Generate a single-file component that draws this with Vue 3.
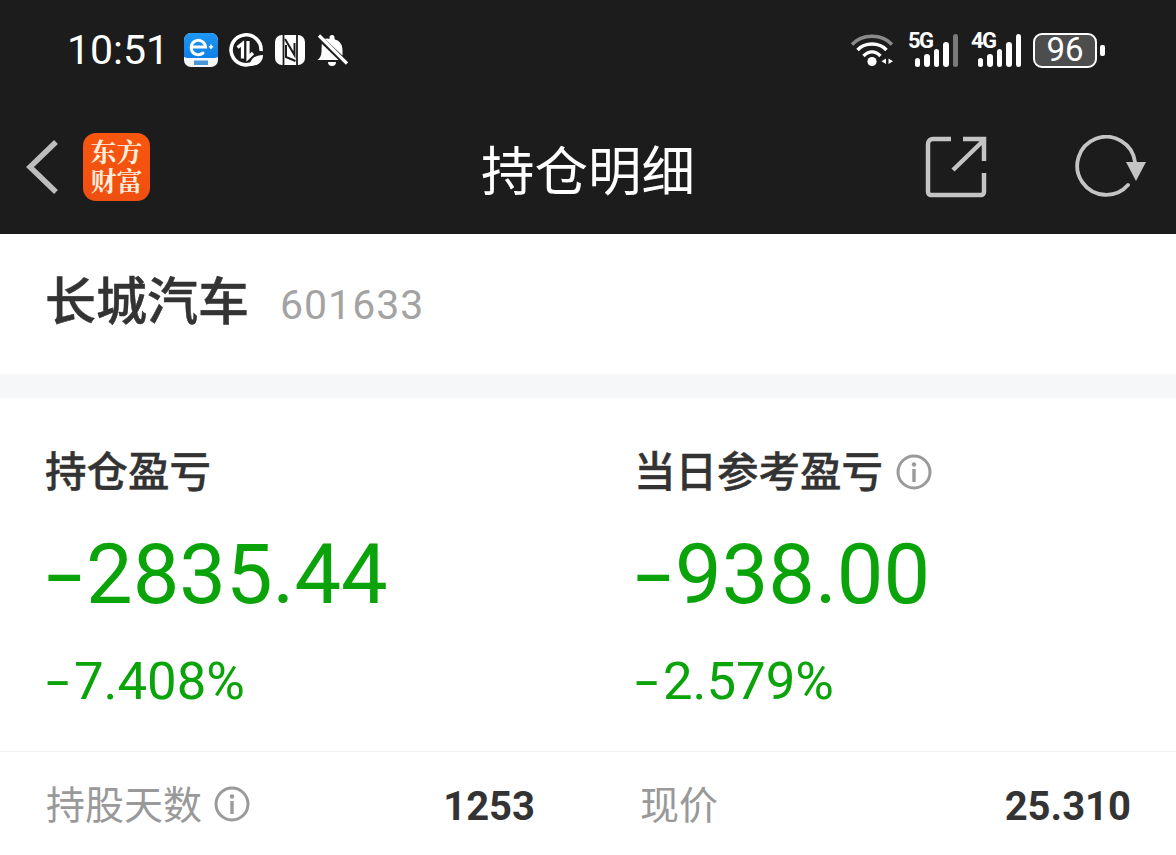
<script setup>
const metrics = [
  { title: '持仓盈亏', sign: '-', value: '2835.44', pctSign: '-', pct: '7.408%', info: false },
  { title: '当日参考盈亏', sign: '-', value: '938.00', pctSign: '-', pct: '2.579%', info: true }
]
</script>

<template>
  <div class="page">
    <header class="top">
      <div class="status">
        <div class="status-left">
          <span class="time">10:51</span>
          <svg viewBox="0 0 34 34" width="34" height="34">
            <defs><linearGradient id="appg" x1="0" y1="0" x2="0" y2="1"><stop offset="0" stop-color="#1e97f5"/><stop offset="1" stop-color="#0f7fe6"/></linearGradient></defs>
            <rect width="34" height="34" rx="7" fill="#f4f7fa"/>
            <path d="M0 7a7 7 0 0 1 7-7h20a7 7 0 0 1 7 7v17l-3 1H3l-3-1z" fill="url(#appg)"/>
            <path d="M8 14h13.500a7.200 7.200 0 1 0-2.500 6" fill="none" stroke="#fff" stroke-width="3" stroke-linecap="round"/>
            <path d="M27 11.500v4.500M24.800 13.700h4.400" stroke="#fff" stroke-width="1.500"/>
            <rect x="10" y="27.500" width="14" height="4.500" fill="#4a94d8"/>
          </svg>
          <svg viewBox="0 0 36 36" width="36" height="36">
            <path d="M26 30.500A15 15 0 1 1 33 19" fill="none" stroke="#fff" stroke-width="3.600"/>
            <path d="M9.500 15.500l5-4v15M20 9v17l5-5" fill="none" stroke="#fff" stroke-width="3.200"/>
            <path d="M22 34c0-7 5-11 13-11 0 7-5 11-13 11z" fill="#fff"/>
          </svg>
          <svg viewBox="0 0 32 32" width="32" height="32">
            <rect x="1" y="1" width="30" height="30" rx="7" fill="#fff"/>
            <path d="M9.500 1v30M23 1v30" stroke="#1c1c1c" stroke-width="1.800"/>
            <path d="M11 5 20.500 21V9M12 11v12l9.500 4" fill="none" stroke="#1c1c1c" stroke-width="2"/>
          </svg>
          <svg viewBox="0 0 32 32" width="32" height="32">
            <path fill="#fff" d="M16 1a2.500 2.500 0 0 1 2.500 2.500v1.700C24 6.500 26.500 11 26.500 16v5.500L8.500 4.800C10 4.500 12 4 13.500 5V3.500A2.500 2.500 0 0 1 16 1zM5.800 9.800 22.500 26H1.500c2.500-2 4-4.500 4-8.500zM12 28h8a4 4 0 0 1-8 0z"/>
            <path d="M3 1.500 31 29.500" stroke="#fff" stroke-width="3.200"/>
          </svg>
        </div>
        <div class="status-right">
          <svg viewBox="0 0 46 36" width="46" height="36">
            <path d="M2 12.500C12 1.500 32 1.500 42 12.500" fill="none" stroke="#8a8a8a" stroke-width="3.400"/>
            <path d="M7.500 18C15 10 29 10 36.500 18" fill="none" stroke="#fff" stroke-width="3.400"/>
            <path d="M13.500 24C18.500 18.500 25.500 18.500 30.500 24" fill="none" stroke="#fff" stroke-width="3.400"/>
            <circle cx="22" cy="29.500" r="4.600" fill="#fff"/>
            <path d="M36 26.500v5.500l-4.500-2.700zM38.500 26.500l4.500 2.800-4.500 2.700z" fill="#fff"/>
          </svg>
          <div class="signal first">
            <span class="net">5G</span>
            <i class="b1"></i><i class="b2"></i><i class="b3"></i><i class="b4"></i><i class="b5 dim"></i>
          </div>
          <div class="signal">
            <span class="net">4G</span>
            <i class="b1"></i><i class="b2"></i><i class="b3"></i><i class="b4"></i><i class="b5"></i>
          </div>
          <div class="battery">
            <div class="battery-body">96</div>
            <span class="battery-cap"></span>
          </div>
        </div>
      </div>
      <nav class="nav">
        <div class="nav-left">
          <svg viewBox="0 0 36 56" width="36" height="56">
            <path d="M31 3 5 28l26 25" fill="none" stroke="#bdbdbd" stroke-width="5.500" />
          </svg>
          <div class="logo">东方财富</div>
        </div>
        <h1 class="nav-title">持仓明细</h1>
        <div class="nav-right">
          <svg viewBox="0 0 62 62" width="62" height="62">
            <path d="M26 3H8a5 5 0 0 0-5 5v48a3 3 0 0 0 3 3h50a3 3 0 0 0 3-3V37M38 3h21v22M59 4 28 34" fill="none" stroke="#c4c4c4" stroke-width="4.500"/>
          </svg>
          <svg viewBox="0 0 72 64" width="72" height="64">
            <path d="M53 50A29 29 0 1 1 60 27" fill="none" stroke="#c4c4c4" stroke-width="3.800" stroke-linecap="round"/>
            <path d="M51 27h20L61 46z" fill="#c4c4c4"/>
          </svg>
        </div>
      </nav>
    </header>

    <section class="stock">
      <span class="stock-name">长城汽车</span>
      <span class="stock-code">601633</span>
    </section>

    <section class="metrics">
      <div v-for="m in metrics" :key="m.title" class="metric">
        <div class="metric-title">
          <span>{{ m.title }}</span>
          <svg v-if="m.info" class="title-info" viewBox="0 0 36 36" width="36" height="36">
            <circle cx="18" cy="18" r="16" fill="none" stroke="#9a9a9a" stroke-width="3"/>
            <circle cx="18" cy="10.500" r="2.200" fill="#9a9a9a"/>
            <path d="M18 15v13" stroke="#9a9a9a" stroke-width="3.400"/>
          </svg>
        </div>
        <div class="metric-value"><span class="sign">{{ m.sign }}</span>{{ m.value }}</div>
        <div class="metric-pct"><span class="sign-small">{{ m.pctSign }}</span>{{ m.pct }}</div>
      </div>
    </section>

    <section class="details">
      <div class="detail left">
        <div class="detail-label">
          <span class="label-text">持股天数</span>
          <svg viewBox="0 0 36 36" width="36" height="36">
            <circle cx="18" cy="18" r="16" fill="none" stroke="#9a9a9a" stroke-width="3"/>
            <circle cx="18" cy="10.500" r="2.200" fill="#9a9a9a"/>
            <path d="M18 15v13" stroke="#9a9a9a" stroke-width="3.400"/>
          </svg>
        </div>
        <span class="detail-value">1253</span>
      </div>
      <div class="detail right">
        <div class="detail-label"><span class="label-text">现价</span></div>
        <span class="detail-value">25.310</span>
      </div>
    </section>
  </div>
</template>

<style scoped>
.page {
  width: 1176px;
  height: 855px;
  overflow: hidden;
  background: #fff;
  font-family: Roboto, "Noto Sans CJK SC", sans-serif;
}
.top { background: #1c1c1c; height: 234px; }
.status {
  height: 100px;
  display: flex;
  justify-content: space-between;
  align-items: center;
  padding: 0 71px 0 67px;
}
.status-left, .status-right { display: flex; align-items: center; }
.status-left { gap: 10px; }
.status-right { gap: 12px; }
.time { font-size: 41px; color: #fff; margin-right: 5px; }
.signal { position: relative; display: flex; align-items: flex-end; gap: 4px; width: 43px; padding-left: 7px; height: 34px; }
.signal.first { margin-right: 1px; }
.signal i { width: 5.500px; background: #fff; border-radius: 3px; display: block; }
.b1 { height: 9px; } .b2 { height: 13px; } .b3 { height: 18px; } .b4 { height: 25px; } .b5 { height: 33px; }
.signal i.dim { background: #7a7a7a; }
.net { position: absolute; left: 0; top: -5px; font-size: 22px; font-weight: 700; color: #fff; letter-spacing: -1.500px; line-height: 26px; }
.battery { display: flex; align-items: center; gap: 3px; }
.battery-body {
  width: 64px; height: 35px; box-sizing: border-box;
  border: 2.500px solid #fff; border-radius: 9px;
  background: #4d4d4d; color: #fff;
  font-size: 33px; line-height: 30px; text-align: center;
}
.battery-cap { width: 5px; height: 11px; background: #fff; border-radius: 2px; }

.nav { height: 134px; position: relative; display: flex; align-items: center; justify-content: space-between; padding: 0 29px 0 25px; box-sizing: border-box; }
.nav-left { display: flex; align-items: center; gap: 22px; }
.logo {
  width: 67px; height: 68px; border-radius: 13px; box-sizing: border-box;
  padding: 3px 7px 0;
  margin-top: -1px;
  background: linear-gradient(#f9560f, #ef4f10); color: #ffeedd;
  text-align: center;
  font-size: 26px; line-height: 29px; font-weight: 700;
  font-family: "Noto Serif CJK SC", "Noto Sans CJK SC", sans-serif;
}
.nav-title {
  position: absolute; left: 0; right: 0; top: 0; height: 134px; margin: 0;
  display: flex; align-items: center; justify-content: center;
  color: #fff; font-size: 53.500px; font-weight: 400;
}
.nav-right { display: flex; align-items: center; gap: 88px; position: relative; }

.stock {
  height: 140px; box-sizing: border-box;
  display: flex; align-items: center; padding-left: 45px; gap: 31px;
}
.stock-name { font-size: 51px; font-weight: 500; -webkit-text-stroke: 0.500px #333; color: #333; line-height: 60px; margin-top: -2px; }
.stock-code { font-size: 41px; color: #a3a3a3; letter-spacing: 1px; line-height: 50px; margin-top: 2px; }

.metrics {
  border-top: 24px solid #f5f7f9;
  border-bottom: 1px solid #f2f2f2;
  height: 353px;
  display: grid;
  grid-template-columns: 589px 1fr;
  padding-left: 46px;
}
.metric-title {
  display: flex; align-items: center; gap: 13px;
  margin: 47px 0 0 -1px;
  height: 48px;
  font-size: 41.500px; font-weight: 500; -webkit-text-stroke: 0.400px #333; color: #333;
}
.title-info { margin-top: 5px; }
.metric-value { font-size: 83px; line-height: 100px; color: #0aa30a; margin-top: 32px; }
.metric-pct { font-size: 52.700px; line-height: 62px; color: #0aa30a; margin-top: 25px; }
.sign {
  display: inline-block; width: 40px;
  transform: scaleX(1.600); transform-origin: 0 50%;
}
.sign-small {
  display: inline-block; width: 28px;
  transform: scaleX(1.600); transform-origin: 0 50%;
}

.details { display: flex; height: 104px; padding: 0 44px 0 46px; box-sizing: border-box; }
.detail { display: flex; align-items: center; justify-content: space-between; padding-top: 4px; }
.detail.left { width: 489px; }
.detail.right { width: 491px; margin-left: 105px; }
.detail-label { display: flex; align-items: center; gap: 12px; font-size: 39px; color: #999; margin-top: -4px; }
.label-text { margin-top: -4px; }
.detail-value { font-size: 40px; font-weight: 700; color: #333; }
</style>
